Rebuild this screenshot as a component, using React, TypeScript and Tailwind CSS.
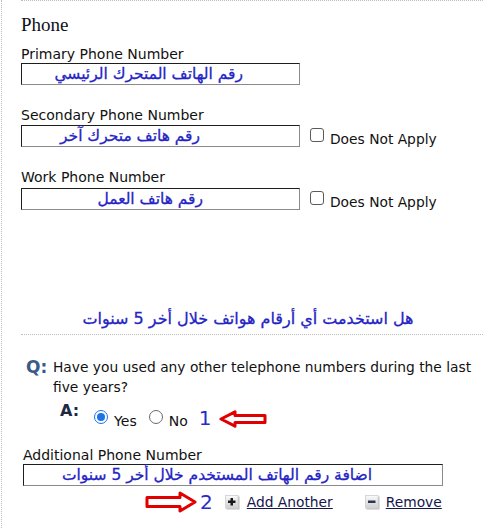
import React from "react";

function LeftArrow() {
  return (
    <svg width="48" height="18" viewBox="0 0 48 18">
      <polygon
        points="2,9 16,1.8 16,5.5 46,5.5 46,12.5 16,12.5 16,16.2"
        fill="#ffffff"
        stroke="#e00000"
        strokeWidth="3"
        strokeLinejoin="round"
      />
    </svg>
  );
}

function RightArrow() {
  return (
    <svg width="52" height="22" viewBox="0 0 52 22">
      <polygon
        points="2,6.5 35,6.5 35,2 50,11 35,20 35,15.5 2,15.5"
        fill="#ffffff"
        stroke="#e00000"
        strokeWidth="3"
        strokeLinejoin="round"
      />
    </svg>
  );
}

function PlusIcon({ minus = false }: { minus?: boolean }) {
  const id = minus ? "gm" : "gp";
  return (
    <svg width="15" height="15" viewBox="0 0 15 15">
      <defs>
        <linearGradient id={id} x1="0" y1="0" x2="0" y2="1">
          <stop offset="0" stopColor="#fbfbfb" />
          <stop offset="1" stopColor="#cfcfcf" />
        </linearGradient>
      </defs>
      <rect x="1.5" y="1.5" width="13" height="13" fill="#bdbdbd" />
      <rect x="0.5" y="0.5" width="12.5" height="12.5" fill={`url(#${id})`} stroke="#d6d6d6" strokeWidth="1" />
      {minus ? (
        <rect x="3" y="5.5" width="7.5" height="2.5" fill="#2a3550" />
      ) : (
        <>
          <rect x="3" y="5.5" width="7.5" height="2.5" fill="#1a1a1a" />
          <rect x="5.5" y="3" width="2.5" height="7.5" fill="#1a1a1a" />
        </>
      )}
    </svg>
  );
}

function Box({
  text,
  width,
  pr,
}: {
  text: string;
  width: string;
  pr: string;
}) {
  return (
    <div
      className={`${width} h-[22px] flex items-center border border-t-[#1e1e1e] border-l-[#1e1e1e] border-r-[#8a8a8a] border-b-[#8a8a8a] bg-white`}
    >
      <div
        dir="rtl"
        className={`w-full ${pr} font-['DejaVu_Sans',sans-serif] text-[15.5px] leading-[18px] text-[#2424c4] whitespace-nowrap [-webkit-text-stroke:0.3px_#2424c4]`}
      >
        {text}
      </div>
    </div>
  );
}

function CheckApply() {
  return (
    <div className="flex items-end">
      <span className="ml-[10px] mb-[5px] w-[14px] h-[14px] rounded-[3px] border border-[#5a5a5a] bg-white" />
      <span className="ml-[6px] text-[13.8px]">Does Not Apply</span>
    </div>
  );
}

export default function App() {
  return (
    <div className="w-[483px] min-h-[528px] bg-white font-['DejaVu_Sans',Verdana,sans-serif] text-[14px] leading-[16px] text-[#111]">
      <div className="ml-[1px] min-h-[528px] border-l border-dotted border-[#bdbdbd] pl-[19px]">
        <div className="border-t border-dotted border-[#bdbdbd]">
          <h2 className="mt-[13px] font-['Liberation_Serif',serif] text-[19px] leading-[22px] text-[#10101c]">
            Phone
          </h2>

          <div className="mt-[10px]">Primary Phone Number</div>
          <div className="mt-[1px]">
            <Box text="رقم الهاتف المتحرك الرئيسي" width="w-[279px]" pr="pr-[56px]" />
          </div>

          <div className="mt-[22px]">Secondary Phone Number</div>
          <div className="mt-[2px] flex items-end">
            <Box text="رقم هاتف متحرك آخر" width="w-[279px]" pr="pr-[99px]" />
            <CheckApply />
          </div>

          <div className="mt-[22px]">Work Phone Number</div>
          <div className="mt-[3px] flex items-end">
            <Box text="رقم هاتف العمل" width="w-[279px]" pr="pr-[96px]" />
            <CheckApply />
          </div>

          <div
            dir="rtl"
            className="mt-[98px] pb-[4px] pr-[8px] border-b border-dotted border-[#bdbdbd] text-center font-['DejaVu_Sans',sans-serif] text-[16px] leading-[22px] text-[#2424c4] [-webkit-text-stroke:0.3px_#2424c4]"
          >
            هل استخدمت أي أرقام هواتف خلال أخر 5 سنوات
          </div>

          <div className="mt-[22px] flex">
            <span className="shrink-0 ml-[5px] w-[27px] text-[17px] leading-[20px] font-bold text-[#3a5a88]">
              Q:
            </span>
            <p className="text-[13.8px] leading-[20px]">
              Have you used any other telephone numbers during the last five years?
            </p>
          </div>

          <div className="mt-[5px] flex items-end">
            <span className="ml-[39px] mb-[9px] text-[16px] leading-[18px] font-bold text-[#1e2a44]">
              A:
            </span>
            <span className="ml-[15px] mb-[5px] w-[14px] h-[14px] rounded-full border-[1.5px] border-[#1a73e8] flex items-center justify-center">
              <span className="w-[8px] h-[8px] rounded-full bg-[#1a73e8]" />
            </span>
            <span className="ml-[6px]">Yes</span>
            <span className="ml-[12px] mb-[5px] w-[14px] h-[14px] rounded-full border border-[#6b6b6b]" />
            <span className="ml-[6px]">No</span>
            <span className="ml-[11px] text-[20px] leading-[22px] text-[#2b2bc8]">1</span>
            <span className="ml-[8px] mb-[1px]">
              <LeftArrow />
            </span>
          </div>

          <div className="ml-[2px] mt-[18px]">Additional Phone Number</div>
          <div className="ml-[2px] mt-[1px]">
            <Box
              text="اضافة رقم الهاتف المستخدم خلال أخر 5 سنوات"
              width="w-[420px]"
              pr="pr-[70px]"
            />
          </div>

          <div className="mt-[5px] ml-[124px] flex items-center">
            <RightArrow />
            <span className="ml-[3px] text-[20px] leading-[22px] text-[#2b2bc8]">2</span>
            <span className="ml-[12px]">
              <PlusIcon />
            </span>
            <span className="ml-[7px] text-[13.8px] underline text-[#16164a]">Add Another</span>
            <span className="ml-[32px]">
              <PlusIcon minus />
            </span>
            <span className="ml-[6px] text-[13.8px] underline text-[#16164a]">Remove</span>
          </div>
        </div>
      </div>
    </div>
  );
}
